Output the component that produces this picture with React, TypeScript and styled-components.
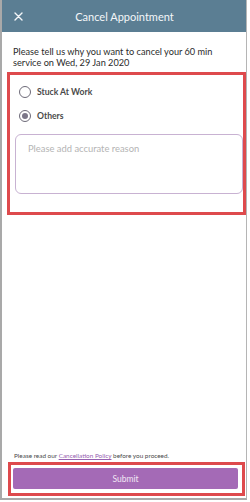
import React from "react";
import styled, { createGlobalStyle } from "styled-components";

const Global = createGlobalStyle`
  html, body { margin: 0; padding: 0; background: #ffffff; }
  * { box-sizing: border-box; }
`;

const Frame = styled.div`
  width: 247px;
  height: 500px;
  display: flex;
  flex-direction: column;
  background: #fff;
  border-left: 2px solid #a9a9a9;
  border-right: 1px solid #b5b5b5;
  border-bottom: 2px solid #a9a9a9;
  font-family: Lato, "Noto Sans", sans-serif;
  overflow: hidden;
`;

const Header = styled.div`
  height: 32px;
  flex: none;
  background: #5b7e93;
  display: grid;
  grid-template-columns: 34px 1fr 34px;
  align-items: center;
  color: #f4f7f9;
`;

const Close = styled.div`
  display: flex;
  justify-content: center;
  padding-right: 1px;
`;

const Title = styled.div`
  text-align: center;
  font-size: 11px;
  padding-left: 1px;
`;

const Intro = styled.p`
  margin: 14px 0 0 0;
  padding: 0 6px 0 11px;
  font-size: 9.2px;
  line-height: 11px;
  color: #2b2b2b;
`;

const Outline = styled.div`
  border: 3px solid #de4a4d;
`;

const ReasonBox = styled(Outline)`
  margin: 4px 0 0 5px;
  padding: 5px 0 18px 5px;
  display: flex;
  flex-direction: column;
`;

const Option = styled.label`
  display: flex;
  align-items: center;
  gap: 6px;
  height: 24px;
  padding-left: 4px;
  font-size: 8.6px;
  font-weight: 700;
  color: #4a4a4a;
`;

const Radio = styled.span<{ $checked?: boolean }>`
  width: 12px;
  height: 12px;
  border-radius: 50%;
  border: 1.3px solid #6d6a78;
  display: flex;
  align-items: center;
  justify-content: center;
  &::after {
    content: "";
    width: 6px;
    height: 6px;
    border-radius: 50%;
    background: ${(p) => (p.$checked ? "#7b7688" : "transparent")};
  }
`;

const TextBox = styled.div`
  margin-top: 6px;
  height: 60px;
  border: 1px solid #c8b2d2;
  border-radius: 6px;
  padding: 8px 12px;
  font-size: 9.4px;
  color: #b4b4b4;
`;

const Spacer = styled.div`
  flex: 1;
`;

const Notice = styled.p`
  margin: 0 0 2px 0;
  padding-left: 12px;
  font-size: 6.4px;
  line-height: 8px;
  color: #4a4a4a;
`;

const Link = styled.span`
  color: #9560b0;
  text-decoration: underline;
`;

const SubmitBox = styled(Outline)`
  margin: 0 1px 2px 6px;
  padding: 3px 4px 4px 2px;
`;

const Button = styled.div`
  height: 21px;
  background: #a46ab6;
  border-radius: 2px;
  display: flex;
  align-items: center;
  justify-content: center;
  color: #f1e6f4;
  font-size: 8.5px;
`;

export default function App() {
  return (
    <>
      <Global />
      <Frame>
        <Header>
          <Close>
            <svg width="9" height="9" viewBox="0 0 9 9">
              <path d="M1 1 L8 8 M8 1 L1 8" stroke="#f4f7f9" strokeWidth="1.4" strokeLinecap="round" />
            </svg>
          </Close>
          <Title>Cancel Appointment</Title>
          <div />
        </Header>
        <Intro>
          Please tell us why you want to cancel your 60 min
          <br />
          service on Wed, 29 Jan 2020
        </Intro>
        <ReasonBox>
          <Option>
            <Radio />
            Stuck At Work
          </Option>
          <Option>
            <Radio $checked />
            Others
          </Option>
          <TextBox>Please add accurate reason</TextBox>
        </ReasonBox>
        <Spacer />
        <Notice>
          Please read our <Link>Cancellation Policy</Link> before you proceed.
        </Notice>
        <SubmitBox>
          <Button>Submit</Button>
        </SubmitBox>
      </Frame>
    </>
  );
}
